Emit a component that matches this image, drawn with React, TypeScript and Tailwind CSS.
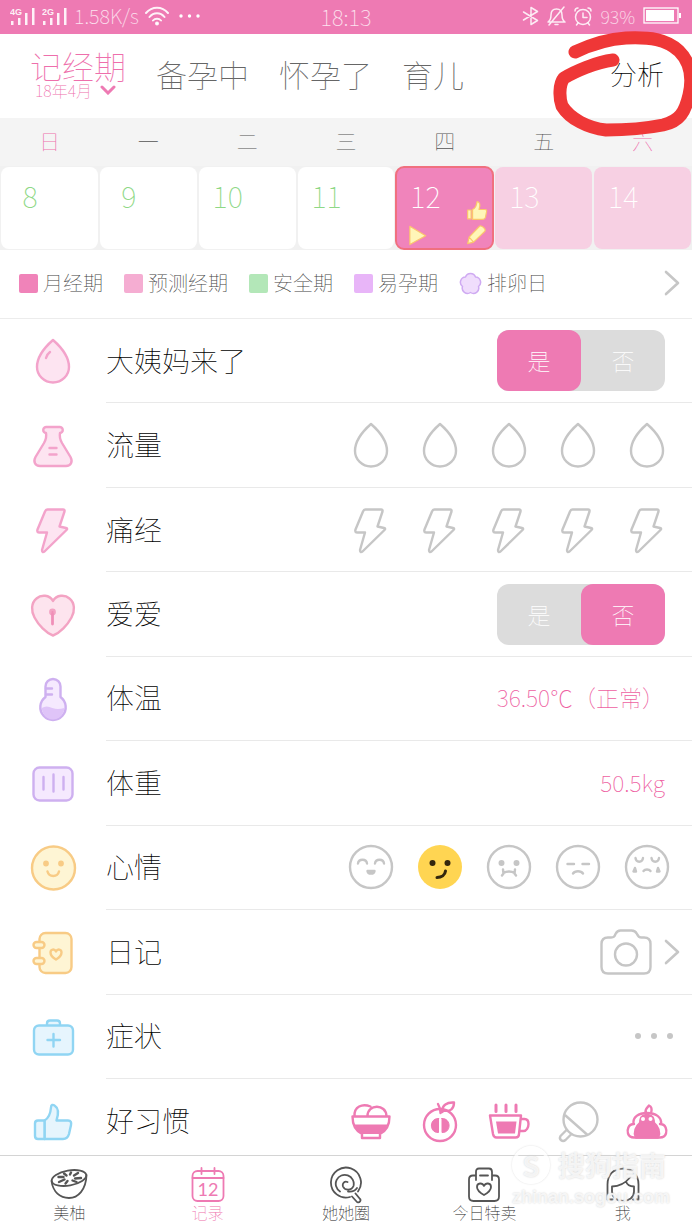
import { useState } from 'react'
import type { ReactNode } from 'react'

const PINK = '#ee7ab3'
const GRAY = '#c6c6c6'

const weekdays = ['日', '一', '二', '三', '四', '五', '六']
const days = [8, 9, 10, 11, 12, 13, 14]

function Icon({ children, size = 48, stroke = GRAY, fill = 'none', width = 2.4 }: {
  children: ReactNode
  size?: number
  stroke?: string
  fill?: string
  width?: number
}) {
  return (
    <svg
      className="shrink-0"
      width={size}
      height={size}
      viewBox={`0 0 ${size} ${size}`}
      fill={fill}
      stroke={stroke}
      strokeWidth={width}
      strokeLinecap="round"
      strokeLinejoin="round"
      aria-hidden="true"
    >
      {children}
    </svg>
  )
}

const dropPath = 'M24 3C28 6.500 40 18 40 30a16 15.500 0 0 1-32 0C8 18 20 6.500 24 3z'
const boltPath = 'M18.500 3.500h15.500q2 0 1.500 2l-5 15 6.500 1.500q2 .5.500 2L15.500 45.500q-2.500 1.500-2.500-1.500l5-17.500h-7.500q-3 0-2-3l7.500-18q.8-2 2.500-2z'
const smallHeart = 'M27 31.500c-3.500-2-5.500-4.500-5.500-7 0-3.500 4-4 5.500-1 1.500-3 5.500-2.500 5.500 1 0 2.500-2 5-5.500 7z'
const thumbPath = 'M15.500 23.500c4.500-2.500 6-7 6.500-13 0-3 2-3 3.500-2 4 2.500 4.500 7.500 2 15h11.500c3 0 3.500 2 3 4.500l-2 9c-1 3.500-3 5-6 5H15.500z'

/* ── Row icons ── */
const rowIcons: Record<string, ReactNode> = {
  drop: (
    <Icon stroke="#f3a3cb" fill="#fde4f1">
      <path d={dropPath} />
      <path d="M21 15c-2 1.500-3.500 3.500-4 6" />
    </Icon>
  ),
  flask: (
    <Icon stroke="#f3a3cb" fill="#fde4f1">
      <path d="M17.500 5h13a3 3 0 0 1 .5 6c-.8 4 0 6.500 2 10l8.500 14c2.500 4.500.5 9-4.500 9H11c-5 0-7-4.500-4.500-9L15 21c2-3.500 2.800-6 2-10a3 3 0 0 1 .5-6z" />
      <path d="M20.500 26h7M20.500 32.500h7" />
    </Icon>
  ),
  bolt: <Icon stroke="#f3a3cb" fill="#fde4f1"><path d={boltPath} /></Icon>,
  heart: (
    <Icon stroke="#f3a3c3" fill="#fde4ee">
      <path d="M24 10C20.500 3.500 12 3.500 7.500 7.500 2 12 2 20 5.500 26.500 9.500 34 17 42 24 44.500 31 42 38.500 34 42.500 26.500 46 20 46 12 40.500 7.500 36 3.500 27.500 3.500 24 10z" />
      <circle cx="23.500" cy="21" r="2.200" fill="#f08fb8" />
      <path d="M23.500 23v10" stroke="#f08fb8" strokeWidth="2.800" />
    </Icon>
  ),
  thermo: (
    <Icon stroke="#ceb0f0" fill="#f5e9fe">
      <path d="M16.500 11.500a7.500 7.500 0 0 1 15 0v10.500a12.700 12.700 0 1 1-15 0z" />
      <path d="M12.800 33c3-2 6.500-2 10.500 0 4.500 1.500 8 1 12 0 0 6-5 11.500-11.300 11.500S13 39 12.800 33z" fill="#dfc4f8" stroke="none" />
      <path d="M17 13.500h6M17 19.500h6" />
    </Icon>
  ),
  scale: (
    <Icon stroke="#ceb0f0" fill="#f5e9fe">
      <rect x="4.500" y="8.500" width="39" height="33" rx="6" />
      <path d="M14.500 18v12.500M24.500 15.500v17M34.500 18v12.500" />
    </Icon>
  ),
  smile: (
    <Icon stroke="#f8cb85" fill="#fef5d4">
      <circle cx="24.500" cy="24" r="21.500" />
      <circle cx="17" cy="19.500" r="1.700" fill="#f8cb85" />
      <circle cx="32" cy="19.500" r="1.700" fill="#f8cb85" />
      <path d="M18.500 27.500c1.500 6 10 6 11.500 0" />
    </Icon>
  ),
  diary: (
    <Icon stroke="#f8cb85" fill="#fef5d4">
      <rect x="10.500" y="5" width="32" height="40" rx="6" />
      <rect x="4.500" y="14" width="11" height="6" rx="3" />
      <rect x="4.500" y="30" width="11" height="6" rx="3" />
      <path d={smallHeart} fill="none" />
    </Icon>
  ),
  kit: (
    <Icon stroke="#90d5f3" fill="#e6f5fd">
      <path d="M18 12.500v-2c0-2 1-3 3-3h7c2 0 3 1 3 3v2" />
      <rect x="5" y="12.500" width="39" height="29" rx="5" />
      <path d="M24.500 21v12.500M18.500 27h12.500" />
    </Icon>
  ),
  thumb: (
    <Icon stroke="#90d5f3" fill="#e6f5fd">
      <path d={thumbPath} />
      <path d="M15.500 23.500H9c-2 0-3 1-3 3V39c0 2 1 3 3 3h6.500z" />
    </Icon>
  ),
}

/* ── Mood faces ── */
const face = <circle cx="24" cy="24" r="21" />
const moods: { name: string; icon: ReactNode }[] = [
  {
    name: '开心',
    icon: (
      <Icon>
        {face}
        <path d="M11 20.500c.5-5 8.500-5 9 0M28 20.500c.5-5 8.500-5 9 0" />
        <path d="M20.500 28h7c-.5 3.500-6.500 3.500-7 0z" fill={GRAY} />
      </Icon>
    ),
  },
  {
    name: '得意',
    icon: (
      <Icon stroke="#33260d" width={3}>
        <circle cx="24" cy="24" r="22" fill="#ffd552" stroke="none" />
        <circle cx="16.500" cy="20" r="3" fill="#33260d" stroke="none" />
        <circle cx="31.500" cy="20" r="3" fill="#33260d" stroke="none" />
        <path d="M21 34.500c4.500 0 8-2.500 8.500-6.500" />
      </Icon>
    ),
  },
  {
    name: '生气',
    icon: (
      <Icon>
        {face}
        <circle cx="16.500" cy="20" r="1.800" fill={GRAY} />
        <circle cx="31.500" cy="20" r="1.800" fill={GRAY} />
        <path d="M18 26.500l.5 4L17 32.500M30 26.500l-.5 4 1.500 2M18.500 30c3-2 8-2 11 0" />
      </Icon>
    ),
  },
  {
    name: '无聊',
    icon: <Icon>{face}<path d="M13.500 21H20M28.500 21H35M19 30.500c2-3 8-3 10 0" /></Icon>,
  },
  {
    name: '难过',
    icon: (
      <Icon>
        {face}
        <path d="M12.500 15c.5 5 7 5 7.500 0M28.500 15c.5 5 7 5 7.500 0M20.500 28c1.500-2 5.500-2 7 0" />
        <path d="M12 25l-1.500 3.500h2.500zM35 25l1.500 3.500h-2.500z" fill={GRAY} />
      </Icon>
    ),
  },
]

/* ── Habit icons ── */
const habits: { name: string; icon: ReactNode }[] = [
  {
    name: '早餐',
    icon: (
      <Icon stroke={PINK}>
        <path d="M7.500 19C7 10 15 6 23.500 9.500M20.500 19C20.500 7 39 6.500 39.500 19M5.500 19.500h37c0 8-3.500 14.500-9.500 17.500v4H15v-4C9 34 5.500 27.500 5.500 19.500z" />
        <path d="M7.500 27.500h33c-1.500 5-4 8-7 9.500h-19c-3-1.500-5.500-4.500-7-9.500z" fill={PINK} stroke="none" />
      </Icon>
    ),
  },
  {
    name: '水果',
    icon: (
      <Icon stroke={PINK}>
        <circle cx="24" cy="28" r="16" />
        <path d="M22.500 21.500v14C13 36 13 21 22.500 21.500zM26 21.500v14C35.500 36 35.500 21 26 21.500z" fill={PINK} strokeWidth="1" />
        <path d="M24.500 16c0-4-1-6.500-2.500-9M26 15c0-7 5-10 12-9.500 0 6-3.500 9.500-10 8z" />
      </Icon>
    ),
  },
  {
    name: '喝水',
    icon: (
      <Icon stroke={PINK}>
        <path d="M5 18.500h31l-2 18.500c0 2-1.500 3.500-3.500 3.500h-19c-2 0-3-1-3.500-3.500zM36 22h3.500c3 0 4 1.500 4 5s-2 7-5 7H35" />
        <path d="M11 24.500h20.500l-1.500 12H13z" fill={PINK} stroke="none" />
        <path d="M11 8v6.500M21 8v6.500M31 8v6.500" strokeWidth="3" />
      </Icon>
    ),
  },
  {
    name: '运动',
    icon: (
      <Icon>
        <circle cx="26.500" cy="22.500" r="17" />
        <path d="M11.500 18.500L33 37.500M12.500 33l-6 6c-2 3.500 2 6.500 5 4l6-6" />
      </Icon>
    ),
  },
  {
    name: '便便',
    icon: (
      <Icon stroke={PINK}>
        <path d="M23 16c-2-3 2-6 3-7.500 4 1.500 2.500 6 2 8M11 27C5 27 4 33 5 36.500c1 3 3 4 6 4h26c3 0 5-1 6-4 1-3.500 0-9.500-6-9.500M10.500 27c-1-7 5-11 13.500-11s15 4 14 11" />
        <path d="M13 40.500c-3-6 0-11 5-15.500h12c5 4.500 8 9.500 5 15.500z" fill={PINK} />
        <path d="M16 26c0-7 3-9 8-9s8 2 8 9z" fill={PINK} stroke="none" />
        <circle cx="20" cy="22" r="2" fill="#fff" stroke="none" />
        <circle cx="27.500" cy="22" r="2" fill="#fff" stroke="none" />
      </Icon>
    ),
  },
]

/* ── Bottom tab icons ── */
const navItems: { label: string; icon: ReactNode }[] = [
  {
    label: '美柚',
    icon: (
      <>
        <ellipse cx="20" cy="12" rx="17.500" ry="7.500" transform="rotate(-10 20 12)" />
        <path d="M2.500 15C4 26 11 32 20 32S37 24 37.500 9" />
        <path d="M21 8.500l1-2M25 9.500l4-2.500M26 12.500l6-.5M23.500 14.500l4 1.500M18.500 15l-2 2.500M15.500 13.500L10 16M14.500 11L9.500 11M17.500 9.500L15 7.500" strokeWidth="2.400" />
      </>
    ),
  },
  {
    label: '记录',
    icon: (
      <>
        <rect x="4.500" y="5" width="31" height="30" rx="5" />
        <path d="M4.500 12h31M13.500 2v6M26.500 2v6" />
        <text x="20" y="30" textAnchor="middle" fontSize="18" fontWeight="400" fill={PINK} stroke="none" fontFamily="Lato, sans-serif">12</text>
      </>
    ),
  },
  {
    label: '她她圈',
    icon: (
      <path d="M24 31A15 15 0 1 1 32 25.500M14 25.500A9 9 0 1 1 27.500 20c-2 5-9 4.500-10.500.5-1-3 1.500-6 4.500-4.500M22 25.500c4 .5 7-.5 9-3.500M26 30.500l5 5.500q2 1 3-.5t0-2.500L29.500 27.500" />
    ),
  },
  {
    label: '今日特卖',
    icon: (
      <>
        <path d="M12 9.500H9c-3 0-4 1-4 4v17c0 3 1.500 4.500 4.500 4.500h21c3 0 4.500-1.500 4.500-4.500v-17c0-3-1-4-4-4h-3M16 9.500h8M12 14V6c0-2.500 1-3.500 3-3.500h10c2 0 3 1 3 3.500v8" />
        <path d="M20 29c-4.500-2.500-7-5-7-8 0-4.500 5.500-4.500 7-1 1.500-3.500 7-3.500 7 1 0 3-2.500 5.500-7 8z" />
      </>
    ),
  },
  {
    label: '我',
    icon: (
      <path d="M10 33.500H4.500v-15C4.500 8 11 2.500 20 2.500S35.500 8 35.500 18.500v15H30M9 20.500c8 0 13-3 18.500-9.500M23 15.500c1 3 4 5 8 5M9 20.500v5c0 6 5 9.500 11 9.500s11-3.500 11-9.500v-5" />
    ),
  },
]

function Signal({ label }: { label: string }) {
  return (
    <svg width="26" height="20" viewBox="0 0 26 20" fill="#fff" fillOpacity="0.9" aria-hidden="true">
      <text x="0" y="9" fontSize="9" fontWeight="700" fontFamily="Liberation Sans, sans-serif">{label}</text>
      <path d="M1 15h2.500v4H1zM8 12h2.500v7H8zM15 7h2.500v12H15zM22 2h2.500v17H22z" />
    </svg>
  )
}

function StatusBar() {
  return (
    <div className="grid grid-cols-[1fr_auto_1fr] items-center h-[34px] px-[10px] pb-[2px] bg-[#ee7ab3] text-white/80 text-[22px] leading-[20px] font-thin">
      <div className="flex items-center gap-[6px]">
        <Signal label="4G" />
        <Signal label="2G" />
        <span className="text-[20px]">1.58K/s</span>
        <svg width="24" height="20" viewBox="0 0 24 20" fill="none" stroke="#fff" strokeOpacity="0.9" strokeWidth="2" strokeLinecap="round" aria-hidden="true">
          <path d="M1 7c6-7 16-7 22 0M4.500 11c4-5 11-5 15 0M8 14.500c2-2.500 6-2.500 8 0" />
          <circle cx="12" cy="17.500" r="1" fill="#fff" />
        </svg>
        <svg className="ml-1" width="22" height="4" viewBox="0 0 22 4" fill="#fff" aria-hidden="true">
          <circle cx="2" cy="2" r="1.700" /><circle cx="10.500" cy="2" r="1.700" /><circle cx="19" cy="2" r="1.700" />
        </svg>
      </div>
      <span>18:13</span>
      <div className="flex items-center justify-end gap-2">
        <svg width="70" height="20" viewBox="0 0 70 20" fill="none" stroke="#fff" strokeOpacity="0.85" strokeWidth="1.500" strokeLinecap="round" strokeLinejoin="round" aria-hidden="true">
          <path d="M1.500 6l14 8.500-6.500 4V1.500l6.500 4L1.500 14" />
          <path d="M26 16c3-2 3-4 3-7 0-4 2-6 5.500-6S40 5 40 9c0 3 0 5 3 7zM42 1L27 19M33 18.500h3" />
          <circle cx="61" cy="11" r="7.500" />
          <path d="M61 7v4.500h4M53 5c0-2 1-3 3-3M69 5c0-2-1-3-3-3M56 17l-1.500 2M66 17l1.500 2" />
        </svg>
        <span className="text-[18px]">93%</span>
        <svg width="39" height="18" viewBox="0 0 39 18" fill="#fff" aria-hidden="true">
          <rect x="1" y="1" width="34" height="15" fill="none" stroke="#fff" strokeWidth="1.300" />
          <rect x="3" y="3" width="28" height="11" />
          <path d="M36 6h2v5h-2z" />
        </svg>
      </div>
    </div>
  )
}

function Header() {
  return (
    <header className="relative flex items-center h-[84px] pl-[30px] pr-[28px] pb-1 text-[#666]">
      <nav className="flex items-center gap-[30px] text-[31px] leading-[32px] font-thin">
        <a href="#period" className="flex flex-col text-[#ee6fac]">
          <span className="text-[32px]">记经期</span>
          <span className="flex items-center gap-2 pl-[5px] text-[16px] leading-[18px]">
            18年4月
            <svg width="16" height="10" viewBox="0 0 16 10" fill="none" stroke={PINK} strokeWidth="3" strokeLinecap="round" aria-hidden="true">
              <path d="M2 2l6 6 6-6" />
            </svg>
          </span>
        </a>
        <a href="#prepare">备孕中</a>
        <a href="#pregnant">怀孕了</a>
        <a href="#baby">育儿</a>
      </nav>
      <a href="#analysis" className="ml-auto text-[27px] font-thin text-black">分析</a>
      {/* Hand-drawn mark around the analysis link */}
      <svg className="absolute right-0 top-0 z-10 overflow-visible pointer-events-none" width="142" height="104" viewBox="550 34 142 104" fill="none" stroke="#ef3737" strokeWidth="13" strokeLinecap="round" strokeLinejoin="round" aria-hidden="true">
        <path d="M575 52C592 44 608 39 626 38C650 37 666 39 679 51C691 63 693 78 689 95C685 112 680 121 663 125C648 128 625 130 606 130C588 128 570 119 562 106C559 98 559 84 564 78C574 72 596 62 613 60" />
      </svg>
    </header>
  )
}

function Calendar() {
  return (
    <section aria-label="日历" className="bg-[#f1f1f1] pb-px">
      <div className="grid grid-cols-7 h-12 items-center bg-[#f4f4f4] pb-[2px] text-center text-[21px] font-thin text-[#555]">
        {weekdays.map((d, i) => (
          <span key={d} className={i % 6 === 0 ? 'text-[#ee6fac]' : ''}>{d}</span>
        ))}
      </div>
      <div className="grid grid-cols-7 gap-[2px] px-px pt-px">
        {days.map((d) => (
          <button
            key={d}
            type="button"
            className={`relative flex h-[82px] items-start rounded-lg pt-3 text-[29px] leading-[32px] font-thin ${
              d < 12
                ? 'bg-white text-[#8ed886]'
                : d === 12
                  ? 'bg-[#f084bb] text-white outline-2 -outline-offset-1 outline-[#f0707f]'
                  : 'bg-[#f7d0e3] text-white'
            }`}
          >
            <span className="w-[58px] text-center">{d}</span>
            {d === 12 && (
              <svg className="absolute inset-0 h-full w-full" viewBox="396 167 97 83" fill="#fff6b8" stroke="#fbc56d" strokeWidth="1.200" strokeLinejoin="round" aria-hidden="true">
                <path d="M409.500 227v18.500l16-9z" />
                <path d="M473 210c3-1 4-4 4.500-8 2.500 0 4 3 2 8h6c2 0 2 1 1.500 3l-1 5c-.5 1.500-1 2-3 2h-10zM468 210.500h3.500v9H468z" />
                <path d="M468 244.500l1.500-6.500L480 227c1.500-1.500 7 2.500 5.500 5L474 243zM469.500 238l4.500 5" />
              </svg>
            )}
          </button>
        ))}
      </div>
    </section>
  )
}

function Legend() {
  return (
    <section className="flex items-center h-[69px] border-b border-[#ececec] pl-[19px] pr-3 pb-[2px] text-[20px] font-thin text-[#444]">
      <ul className="flex items-center gap-[21px]">
        <li className="flex items-center gap-[5px]"><i className="size-[19px] rounded-xs bg-[#f083b9]" />月经期</li>
        <li className="flex items-center gap-[5px]"><i className="size-[19px] rounded-xs bg-[#f5add2]" />预测经期</li>
        <li className="flex items-center gap-[5px]"><i className="size-[19px] rounded-xs bg-[#b3e7b8]" />安全期</li>
        <li className="flex items-center gap-[5px]"><i className="size-[19px] rounded-xs bg-[#e8b5f8]" />易孕期</li>
        <li className="flex items-center gap-[5px]">
          <svg width="23" height="23" viewBox="0 0 23 23" fill="#f0ddfc" stroke="#cfaaf2" strokeWidth="1.500" strokeLinejoin="round" aria-hidden="true">
            <path d="M6.500 5A5.300 5.300 0 0 1 16.500 5A5.300 5.300 0 0 1 19.500 14.500A5.300 5.300 0 0 1 11.500 20.500A5.300 5.300 0 0 1 3.500 14.500A5.300 5.300 0 0 1 6.500 5z" />
          </svg>
          排卵日
        </li>
      </ul>
      <button type="button" aria-label="更多" className="ml-auto"><Chevron /></button>
    </section>
  )
}

function Chevron() {
  return (
    <svg width="16" height="26" viewBox="0 0 16 26" fill="none" stroke={GRAY} strokeWidth="2.600" strokeLinecap="round" strokeLinejoin="round" aria-hidden="true">
      <path d="M2 2l12 11L2 24" />
    </svg>
  )
}

function Row({ icon, label, last, children }: { icon: string; label: string; last?: boolean; children: ReactNode }) {
  return (
    <li className={`flex ${last ? 'h-[76px] pt-2' : 'grow basis-20'}`}>
      <div className="flex w-[106px] shrink-0 items-center justify-center">{rowIcons[icon]}</div>
      <div className={`flex flex-1 items-center justify-between ${last ? '' : 'border-b border-[#e9e9e9]'}`}>
        <span className="pb-[2px] text-[28px] leading-[36px] font-thin text-black">{label}</span>
        {children}
      </div>
    </li>
  )
}

function YesNo({ label, initial }: { label: string; initial: boolean }) {
  const [value, setValue] = useState(initial)
  return (
    <div role="group" aria-label={label} className="mr-[27px] flex rounded-xl bg-[#dcdcdc] text-[23px] font-thin text-white">
      {[true, false].map((v) => (
        <button
          key={String(v)}
          type="button"
          aria-pressed={value === v}
          onClick={() => setValue(v)}
          className={`h-[61px] w-[84px] rounded-xl ${value === v ? 'bg-[#ee7ab3]' : ''}`}
        >
          {v ? '是' : '否'}
        </button>
      ))}
    </div>
  )
}

function Choices({ items }: { items: { name: string; icon: ReactNode }[] }) {
  return (
    <div className="mr-[11px] grid grid-cols-5">
      {items.map((it) => (
        <button key={it.name} type="button" aria-label={it.name} className="flex w-[69px] justify-center">{it.icon}</button>
      ))}
    </div>
  )
}

function levels(name: string, path: string) {
  return [1, 2, 3, 4, 5].map((n) => ({ name: `${name} ${n}`, icon: <Icon><path d={path} /></Icon> }))
}

function Watermark() {
  return (
    <div className="absolute bottom-[23px] right-[22px] z-20 pointer-events-none text-white/75 [text-shadow:0_0_2px_#d0d0d0] font-['Noto_Sans_CJK_SC',sans-serif]">
      <div className="flex items-center gap-2">
        <span className="flex size-[38px] items-center justify-center rounded-full border-3 border-white/75 text-[28px] leading-none font-bold shadow-[0_0_2px_#d8d8d8]">S</span>
        <span className="text-[27px] leading-[44px] font-bold">搜狗指南</span>
      </div>
      <div className="text-[18px] leading-[20px] font-bold font-['Liberation_Sans',sans-serif]">zhinan.sogou.com</div>
    </div>
  )
}

export default function App() {
  return (
    <div className="relative flex min-h-screen flex-col overflow-hidden bg-white font-['Noto_Sans_CJK_SC',sans-serif]">
      <StatusBar />
      <Header />
      <Calendar />
      <Legend />
      <ul className="flex flex-1 flex-col">
        <Row icon="drop" label="大姨妈来了"><YesNo label="大姨妈来了" initial={true} /></Row>
        <Row icon="flask" label="流量"><Choices items={levels('流量', dropPath)} /></Row>
        <Row icon="bolt" label="痛经"><Choices items={levels('痛经', boltPath)} /></Row>
        <Row icon="heart" label="爱爱"><YesNo label="爱爱" initial={false} /></Row>
        <Row icon="thermo" label="体温">
          <span className="mr-[27px] pb-[2px] text-[23px] font-thin text-[#ee5fa2]">36.50℃（正常）</span>
        </Row>
        <Row icon="scale" label="体重">
          <span className="mr-[27px] pb-[2px] text-[23px] font-thin text-[#ee5fa2]">50.5kg</span>
        </Row>
        <Row icon="smile" label="心情"><Choices items={moods} /></Row>
        <Row icon="diary" label="日记">
          <button type="button" aria-label="写日记" className="mr-3 flex items-center gap-3">
            <svg width="52" height="46" viewBox="0 0 52 46" fill="none" stroke={GRAY} strokeWidth="2.400" strokeLinejoin="round" aria-hidden="true">
              <path d="M8 8.500h3c3 0 3.500-1 4.500-3.500C17 2 18 1.500 20.500 1.500h11c2.500 0 4 .5 5.500 3.500 1 2.500 2 3.500 4.500 3.500H44c4 0 6.500 2.500 6.500 6.500v23c0 4-2.500 6.500-6.500 6.500H8c-4 0-6.500-2.500-6.500-6.500V15c0-4 2.500-6.500 6.500-6.500z" />
              <circle cx="26" cy="25.500" r="11" />
            </svg>
            <Chevron />
          </button>
        </Row>
        <Row icon="kit" label="症状">
          <button type="button" aria-label="选择症状" className="mr-[19px] flex gap-[10px]">
            <i className="size-[6px] rounded-full bg-[#c6c6c6]" />
            <i className="size-[6px] rounded-full bg-[#c6c6c6]" />
            <i className="size-[6px] rounded-full bg-[#c6c6c6]" />
          </button>
        </Row>
        <Row icon="thumb" label="好习惯" last><Choices items={habits} /></Row>
      </ul>
      <nav className="grid h-[75px] grid-cols-5 border-t border-[#d4d4d4] bg-white">
        {navItems.map((n, i) => (
          <a
            key={n.label}
            href={`#tab${i}`}
            className={`flex flex-col items-center pt-[10px] text-[16px] leading-[12px] font-thin ${i === 1 ? 'text-[#ee6fac]' : 'text-[#222]'}`}
          >
            <Icon size={40} stroke={i === 1 ? PINK : '#555'} width={1.800}>{n.icon}</Icon>
            <span>{n.label}</span>
          </a>
        ))}
      </nav>
      <Watermark />
    </div>
  )
}
